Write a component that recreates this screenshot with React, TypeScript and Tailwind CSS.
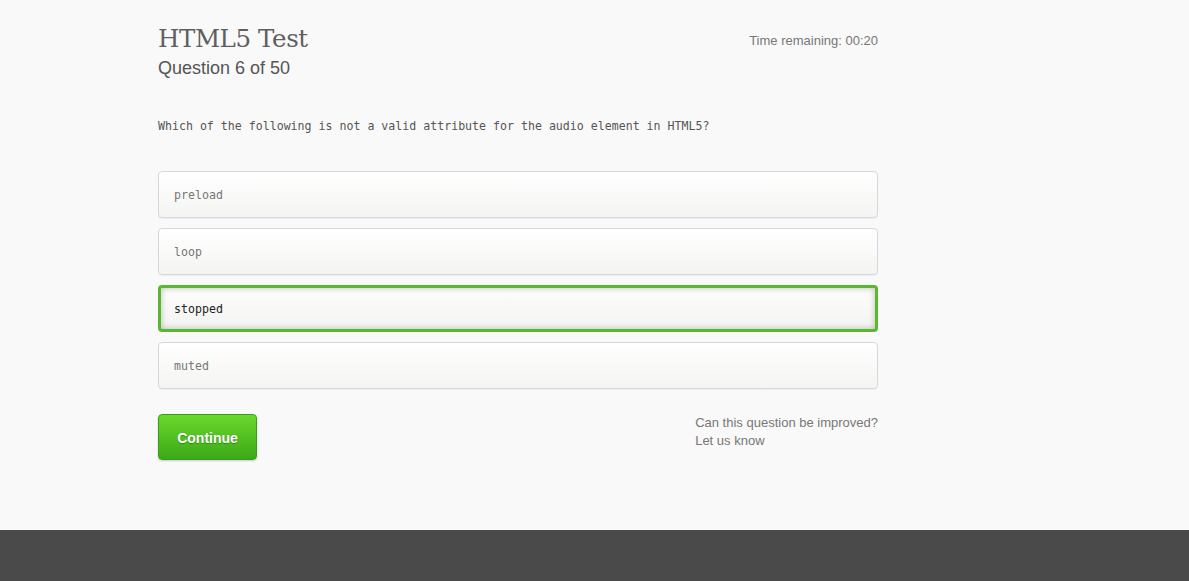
import React from 'react';

const options = ['preload', 'loop', 'stopped', 'muted'];
const selected = 'stopped';

const App: React.FC = () => {
  return (
    <div className="min-h-screen flex flex-col bg-[#f9f9f9] font-['Liberation_Sans',Arial,sans-serif]">
      <div className="h-[530px] pl-[158px]">
        <div className="w-[720px] pt-[22px]">
          <div className="flex justify-between items-start">
            <div>
              <h1 className="text-[24.5px] leading-[34px] text-[#5f5f5f] font-['DejaVu_Serif',serif] tracking-[-0.4px]">
                HTML5 Test
              </h1>
              <h2 className="mt-[1px] text-[18px] leading-[22px] text-[#555]">Question 6 of 50</h2>
            </div>
            <div className="mt-[11px] text-[13px] leading-[16px] text-[#777]">Time remaining: 00:20</div>
          </div>

          <p className="mt-[39px] text-[11.6px] leading-[16px] text-[#555] font-['DejaVu_Sans_Mono',monospace]">
            Which of the following is not a valid attribute for the audio element in HTML5?
          </p>

          <div className="mt-[37px] flex flex-col gap-[10px]">
            {options.map((opt) =>
              opt === selected ? (
                <div
                  key={opt}
                  className="h-[47px] flex items-center pt-[2px] px-[13px] rounded-[4px] border-[3px] border-[#5ab82f] bg-gradient-to-b from-[#fdfdfc] to-[#f3f3f1] shadow-[inset_0_0_6px_rgba(0,0,0,0.25)] text-[11.6px] text-[#222] font-['DejaVu_Sans_Mono',monospace]"
                >
                  {opt}
                </div>
              ) : (
                <div
                  key={opt}
                  className="h-[47px] flex items-center pt-[2px] px-[15px] rounded-[4px] border border-[#d6d8e0] bg-gradient-to-b from-white to-[#f4f4f2] shadow-[0_1px_1px_rgba(0,0,0,0.05)] text-[11.6px] text-[#777] font-['DejaVu_Sans_Mono',monospace]"
                >
                  {opt}
                </div>
              )
            )}
          </div>

          <div className="mt-[25px] flex justify-between items-start">
            <button className="w-[99px] h-[46px] pt-[2px] rounded-[4px] bg-gradient-to-b from-[#6ad82c] to-[#3aa918] border border-[#3a9e1a] text-white text-[14px] font-bold [text-shadow:0_1px_1px_rgba(0,0,0,0.3)] shadow-[0_1px_2px_rgba(0,0,0,0.2)]">
              Continue
            </button>
            <div className="text-[13px] leading-[18px] text-[#777] whitespace-nowrap">
              <div>Can this question be improved?</div>
              <div>Let us know</div>
            </div>
          </div>
        </div>
      </div>
      <div className="flex-1 bg-[#4a4a4a] min-h-[51px]" />
    </div>
  );
};

export default App;
